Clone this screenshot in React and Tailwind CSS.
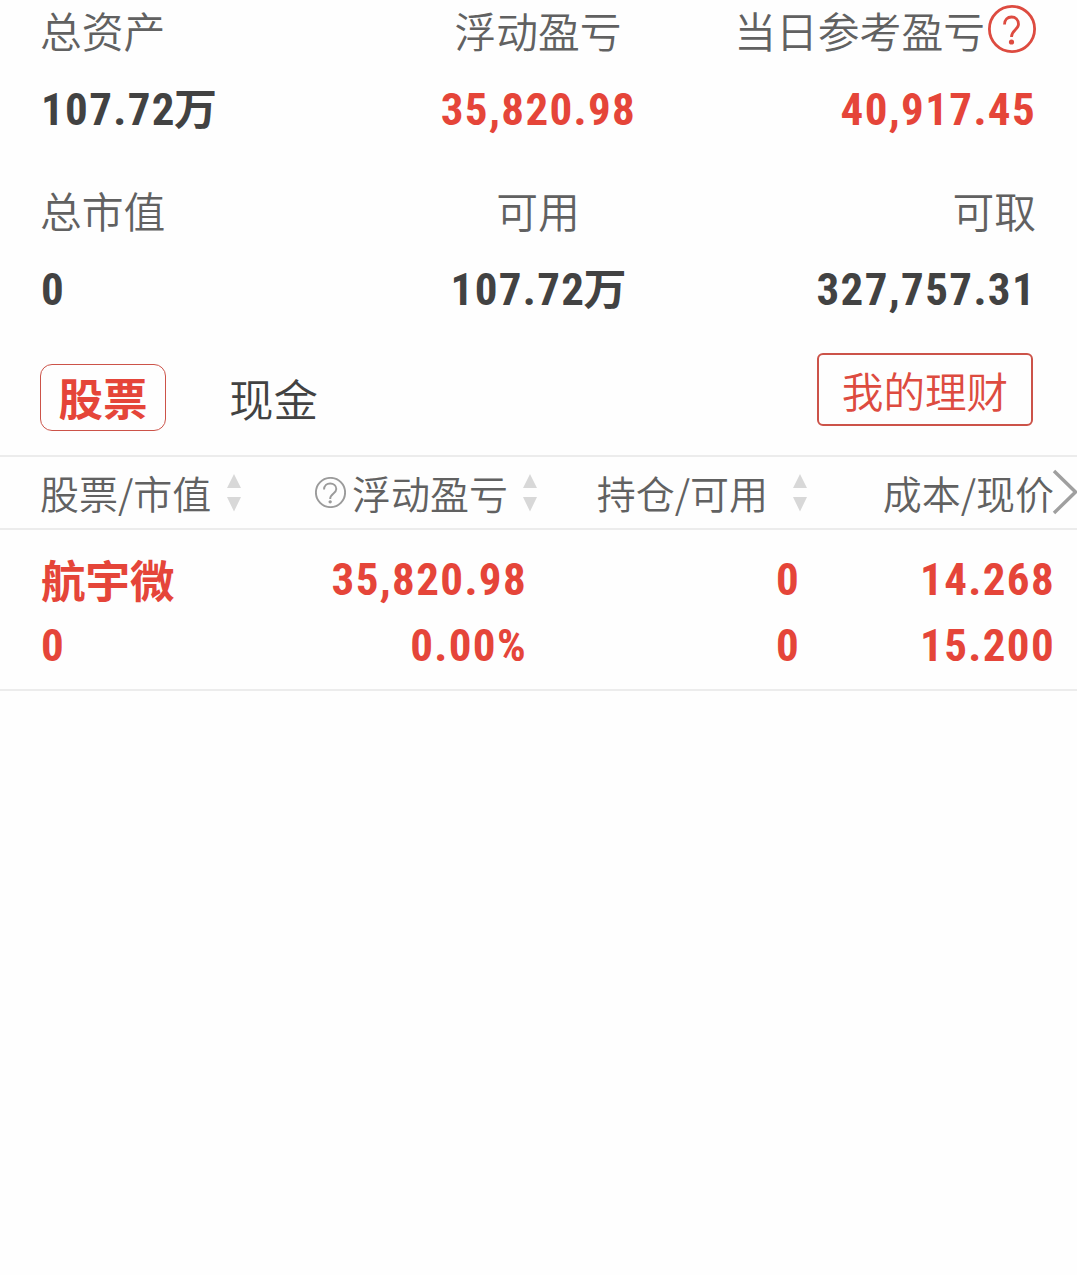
const summary = [
  [
    { label: '总资产', value: '107.72', unit: '万' },
    { label: '浮动盈亏', value: '35,820.98', red: true },
    { label: '当日参考盈亏', value: '40,917.45', red: true, help: true },
  ],
  [
    { label: '总市值', value: '0' },
    { label: '可用', value: '107.72', unit: '万' },
    { label: '可取', value: '327,757.31' },
  ],
];

const aligns = ['items-start', 'items-center', 'items-end'];

function Num({ children, unit }) {
  return (
    <span className="flex items-baseline pl-px whitespace-nowrap">
      <span className="font-['Roboto','Noto_Sans_CJK_SC',sans-serif] text-[45px] font-bold tracking-[1.35px] [font-stretch:75%]">{children}</span>
      {unit && <span className="-ml-0.5 text-[43px] leading-[80px] font-bold">{unit}</span>}
    </span>
  );
}

function HelpIcon({ className, hook, dotY, thick }) {
  return (
    <svg viewBox="0 0 48 48" className={className} fill="none" stroke="currentColor" strokeWidth={thick}>
      <circle cx="24" cy="24" r="22.6" />
      <path d={hook} />
      <circle cx="23.5" cy={dotY} r="2.6" fill="currentColor" stroke="none" />
    </svg>
  );
}

function Sort() {
  return (
    <svg viewBox="0 0 14 38" className="h-[38px] w-3.5 shrink-0 fill-[#d8d8d8]">
      <path d="M7 0 14 14H0ZM0 23H14L7 37.5Z" />
    </svg>
  );
}

export default function App() {
  return (
    <main className="relative h-[1275px] w-[1077px] overflow-hidden bg-[#fefefe] font-['Noto_Sans_CJK_SC',sans-serif] text-[#424242]">
      <section className="flex h-[352px] flex-col pr-[41px] pl-10">
        {summary.map((row, r) => (
          <div key={r} className="grid h-[180px] shrink-0 grid-cols-3">
            {row.map((item, i) => (
              <div key={item.label} className={`flex flex-col ${aligns[i]}`}>
                <div className="flex h-[60px] items-center whitespace-nowrap text-[41.8px] leading-[60px] font-[350] text-[#616161]">
                  {item.label}
                  {item.help && (
                    <HelpIcon
                      className="mb-0.5 ml-[3px] size-12 text-[#dd4b40]"
                      hook="M16.500 19.500C16.500 14.500 19.500 12 23.500 12s7 2.700 7 7.200c0 5.300-7 6-7 12.800"
                      dotY="37"
                      thick={2.8}
                    />
                  )}
                </div>
                <div className={`flex h-[100px] items-center leading-[100px] ${item.red ? 'text-[#e54539]' : ''}`}>
                  <Num unit={item.unit}>{item.value}</Num>
                </div>
              </div>
            ))}
          </div>
        ))}
      </section>

      <section className="flex h-[103px] items-start pr-11 pl-10">
        <button className="mt-3 h-[67px] w-[126px] rounded-xl border border-[#cc5349] pb-px text-[44.5px] leading-[50px] font-bold text-[#e54539]">股票</button>
        <button className="mt-3 ml-[63px] text-[44.5px] leading-[67px] font-[350]">现金</button>
        <button className="mt-px ml-auto h-[73px] w-[216px] rounded-md border-2 border-[#cc5349] text-[41.6px] leading-[50px] font-[350] text-[#dd4b40]">我的理财</button>
      </section>

      <section>
        <div className="grid h-[75px] grid-cols-[287px_250px_270px_270px] items-center border-y-2 border-[#ececec] text-[39px] leading-[71px] font-[350] whitespace-nowrap text-[#616161]">
          <div className="flex items-center gap-4 pl-10">股票/市值<Sort /></div>
          <div className="flex items-center justify-end">
            <HelpIcon
              className="mr-1.5 size-[31px] text-[#9b9b9b]"
              hook="M14 19.500C14 13 18.500 10 23.500 10s9.500 3.200 9.500 8.700c0 6.800-9.500 7-9.500 15.300"
              dotY="38.5"
              thick={3}
            />
            <span className="mr-[15px]">浮动盈亏</span>
            <Sort />
          </div>
          <div className="flex items-center justify-end gap-[25px]">持仓/可用<Sort /></div>
          <div className="pr-[23px] text-right">成本/现价</div>
        </div>
        <div className="grid h-[161px] grid-cols-[287px_250px_270px_270px] border-b-2 border-[#ececec] pt-[17px] leading-[66px] text-[#e54539]">
          <div className="flex flex-col pl-10">
            <span className="h-[66px] pl-px text-[44.5px] leading-[63px] font-bold">航宇微</span>
            <Num>0</Num>
          </div>
          <div className="flex flex-col items-end pr-2.5">
            <Num>35,820.98</Num>
            <Num>0.00%</Num>
          </div>
          <div className="flex flex-col items-end pr-[7px]">
            <Num>0</Num>
            <Num>0</Num>
          </div>
          <div className="flex flex-col items-end pr-[22px]">
            <Num>14.268</Num>
            <Num>15.200</Num>
          </div>
        </div>
      </section>
      <svg viewBox="0 0 25 46" className="absolute top-[469px] right-0 h-[46px] w-[25px] fill-none stroke-[#9f9f9f] stroke-[3.4]">
        <path d="M2 2 23.500 23 2 44" />
      </svg>
    </main>
  );
}
